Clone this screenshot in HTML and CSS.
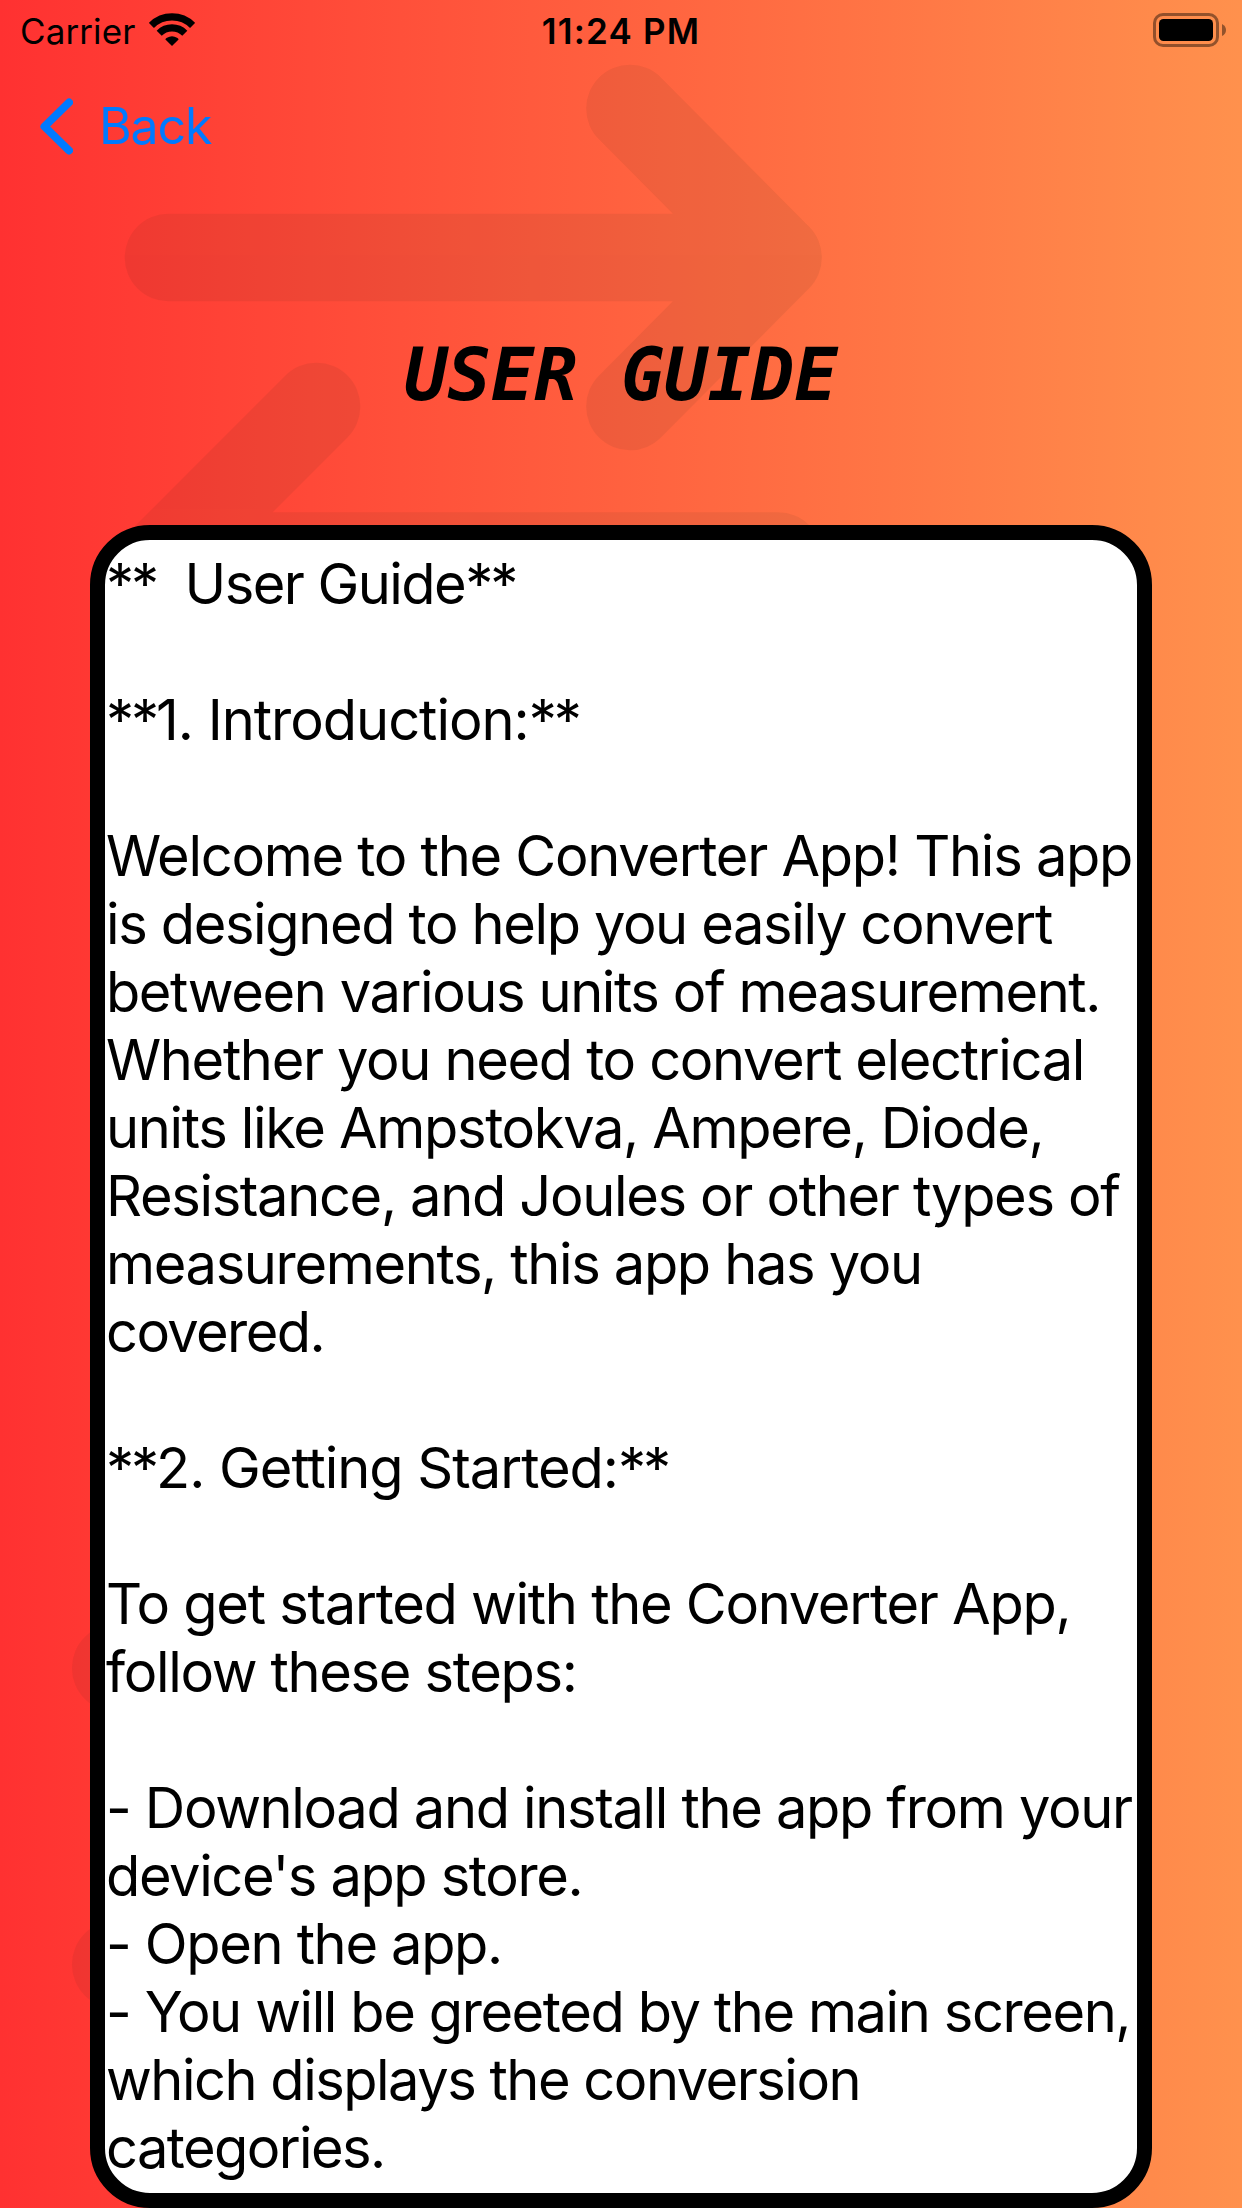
FILE: index.html
```html
<!DOCTYPE html>
<html lang="en">
<head>
<meta charset="utf-8">
<title>User Guide</title>
<link rel="stylesheet" href="styles.css">
</head>
<body>
<main class="screen">
  <svg class="backdrop" viewBox="0 0 1242 2208" aria-hidden="true">
    <g class="arrows">
      <path d="M168.5 257.5H778M630 108.5L778 257.5L630 406.5"/>
      <path d="M778 556H167M316.5 406.5L167 556L316.5 705"/>
      <path d="M115.7 1668H116M115.7 1964.5H116"/>
    </g>
  </svg>
  <header class="status">
    <div class="status-left">
      <span class="carrier">Carrier</span>
      <svg class="wifi" viewBox="0 0 46 34">
        <path class="wifi-arc" d="M2.4 12.4A29.3 29.3 0 0 1 43.6 12.4M10.2 20.2A18.2 18.2 0 0 1 35.8 20.2"/>
        <path d="M23 33L16.4 26.4Q16.6 25.6 18 24.7Q23 21.6 28 24.7Q29.4 25.6 29.6 26.4Z"/>
      </svg>
    </div>
    <span class="time">11:24 PM</span>
    <svg class="battery" viewBox="0 0 74 34">
      <g opacity=".42">
        <rect x="1.5" y="1.5" width="63" height="31" rx="8.5" fill="none" stroke="#000" stroke-width="3"/>
        <path d="M69 11Q73 13 73 17Q73 21 69 23Z"/>
      </g>
      <rect x="6" y="6" width="54" height="22" rx="4.5"/>
    </svg>
  </header>
  <nav class="nav">
    <a class="back">
      <svg class="chevron" viewBox="0 0 34 57"><path d="M30 4.5L5.5 28.5L30 52.5"/></svg>
      <span class="back-label">Back</span>
    </a>
  </nav>
  <h1 class="title">USER GUIDE</h1>
  <article class="guide">
    <p><span class="l1"><i class="mark">**</i>&nbsp; User Guide<i class="mark">**</i></span></p>
    <p><span class="l2"><i class="mark">**</i>1. Introduction:<i class="mark">**</i></span></p>
    <p><span class="l3">Welcome to the Converter App! This app</span><span class="l4">is designed to help you easily convert</span><span class="l5">between various units of measurement.</span><span class="l6">Whether you need to convert electrical</span><span class="l7">units like Ampstokva, Ampere, Diode,</span><span class="l8">Resistance, and Joules or other types of</span><span class="l9">measurements, this app has you</span><span class="l10">covered.</span></p>
    <p><span class="l11"><i class="mark">**</i>2. Getting Started:<i class="mark">**</i></span></p>
    <p><span class="l12">To get started with the Converter App,</span><span class="l13">follow these steps:</span></p>
    <p><span class="l14">- Download and install the app from your</span><span class="l15">device's app store.</span><span class="l16">- Open the app.</span><span class="l17">- You will be greeted by the main screen,</span><span class="l18">which displays the conversion</span><span class="l19">categories.</span></p>
  </article>
</main>
</body>
</html>
```
FILE: styles.css
```css
* { box-sizing: border-box; }
body { margin: 0; font-family: Inter, "Liberation Sans", sans-serif; color: #000; }
.screen {
  position: relative;
  width: 1242px;
  height: 2208px;
  overflow: hidden;
  display: flex;
  flex-direction: column;
  background: linear-gradient(90deg, #ff3131, #ff914d);
}
.backdrop { position: absolute; inset: 0; width: 100%; height: 100%; }
.arrows { opacity: .06; }
.arrows path { fill: none; stroke: #001a10; stroke-width: 87.6; stroke-linecap: round; stroke-linejoin: round; }
.status, .nav, .title, .guide { position: relative; }
.status {
  height: 60px;
  display: grid;
  grid-template-columns: 1fr auto 1fr;
  padding: 0 15px 0 20px;
  line-height: 62px;
}
.status-left { display: flex; }
.carrier { width: 129px; font-size: 35px; letter-spacing: .1px; }
.wifi { width: 46px; height: 34px; margin-top: 13px; }
.wifi-arc { fill: none; stroke: #000; stroke-width: 7.2; }
.time { font-size: 35px; font-weight: 590; letter-spacing: 1.2px; margin: 0 5px 0 0; }
.battery { width: 74px; height: 34px; margin-top: 13px; justify-self: end; }
.nav { height: 132px; padding: 0 39px; }
.back { display: flex; align-items: center; height: 132px; gap: 26px; color: #007aff; font-size: 50px; letter-spacing: -1.1px; }
.chevron { width: 34px; height: 57px; }
.chevron path { fill: none; stroke: #007aff; stroke-width: 8; stroke-linecap: round; stroke-linejoin: round; }
.title {
  margin: 0;
  height: 333px;
  padding-top: 143px;
  text-align: center;
  font: italic bold 72px/80px "DejaVu Sans Mono", monospace;
}
.guide {
  width: 1062px;
  height: 1683px;
  margin: 0 auto;
  padding: 10px 0 0 1px;
  border: 15px solid #000;
  border-radius: 60px;
  background: #fff;
  font-size: 56px;
  line-height: 68px;
  white-space: nowrap;
}
.guide p { margin: 0 0 68px; }
.guide span { display: block; letter-spacing: -1.38px; }
.guide .mark { font-style: normal; letter-spacing: -3px; }
.guide .l1 { letter-spacing: -1.55px; }
.guide .l2, .guide .l11 { letter-spacing: -1.02px; }
.guide .l3, .guide .l12 { letter-spacing: -1.28px; }
.guide .l6, .guide .l7, .guide .l9 { letter-spacing: -1.35px; }
.guide .l8, .guide .l13, .guide .l14 { letter-spacing: -1.34px; }
.guide .l5, .guide .l17 { letter-spacing: -1.42px; }
.guide .l16 { letter-spacing: -1.35px; }
.guide .l18 { letter-spacing: -1.5px; }
.guide .l10, .guide .l19 { letter-spacing: -1.6px; }
```
